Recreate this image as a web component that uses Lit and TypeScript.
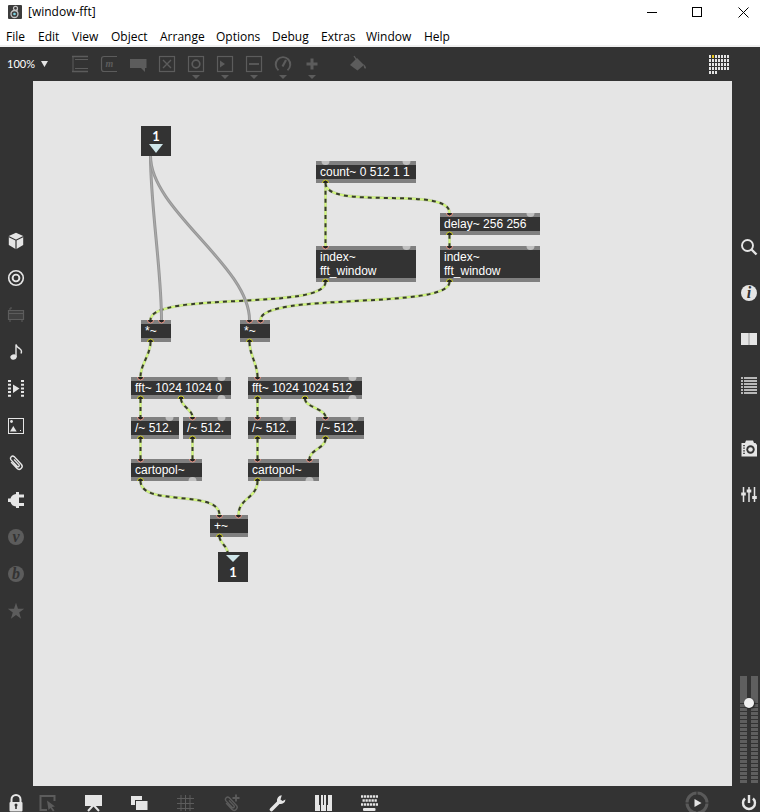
import { LitElement, html, svg, css, type TemplateResult, type SVGTemplateResult } from "lit";
import { customElement, property } from "lit/decorators.js";
import { classMap } from "lit/directives/class-map.js";
import { styleMap } from "lit/directives/style-map.js";

type Glyph = SVGTemplateResult;
interface Tool { label: string; art: Glyph; off?: boolean; drop?: boolean; gap?: boolean }

const BG = "#333333";

/* ---------- toolbar glyphs (18 x 18) ---------- */
const frame = svg`<rect x="1.5" y="1.5" width="15" height="15" fill="none" stroke="currentColor" stroke-width="1.200"/>`;
const toolbar: Tool[] = [
  { label: "Object", art: svg`<path d="M1 1.500H17M1 16.500H17" stroke="currentColor" stroke-width="1.400"/><path d="M2 1V17" stroke="currentColor" stroke-width="1"/><path d="M4 4.500H17M4 13.500H17" stroke="currentColor"/>` },
  { label: "Message", art: svg`<path d="M17 1.500H4Q1.500 1.500 1.500 4V14Q1.500 16.500 4 16.500H17" fill="none" stroke="currentColor" stroke-width="1.200"/><text x="9.500" y="12" text-anchor="middle" class="mi">m</text>` },
  { label: "Comment", art: svg`<path d="M1 4H17.500V13H16V17L12 13H1Z" fill="currentColor"/>` },
  { label: "Toggle", art: svg`${frame}<path d="M5 5L13 13M13 5L5 13" stroke="currentColor" stroke-width="1.400"/>` },
  { label: "Button", drop: true, art: svg`${frame}<circle cx="9" cy="9" r="3.800" fill="none" stroke="currentColor" stroke-width="1.700"/>` },
  { label: "Number", drop: true, art: svg`${frame}<path d="M4 5.500L9 9L4 12.500Z" fill="currentColor"/>` },
  { label: "Slider", drop: true, art: svg`${frame}<path d="M4 9H14" stroke="currentColor" stroke-width="1.800"/>` },
  { label: "Dial", drop: true, art: svg`<path d="M4.500 15.200A7.300 7.300 0 1 1 13.500 15.200" fill="none" stroke="currentColor" stroke-width="1.900"/><path d="M8.500 11.500L12 5" stroke="currentColor" stroke-width="2.200"/>` },
  { label: "Add", drop: true, art: svg`<path d="M9 3.500V14.500M3.500 9H14.500" stroke="currentColor" stroke-width="3"/>` },
  { label: "Format", gap: true, art: svg`<path d="M1 10L8 3L15 10L8.500 15.500Z" fill="currentColor"/><path d="M5 1L9 7" stroke="currentColor" stroke-width="1.300"/><path d="M14.500 9Q18 12.500 16.600 13.500Q14.800 14.500 14.500 9Z" fill="currentColor"/>` },
];

/* ---------- left bar glyphs ---------- */
const clip = svg`<g transform="rotate(-43 9 9)" fill="none" stroke="currentColor" stroke-width="1.400"><path d="M6 5V13.500A3 3 0 0 0 12 13.500V3A2.300 2.300 0 0 0 7.500 3V12.500A1.300 1.300 0 0 0 10 12.500V5"/></g>`;
const badge = (ch: string) => svg`<circle cx="9" cy="9" r="8" fill="currentColor"/><text x="9" y="14" text-anchor="middle" class="script" fill=${BG}>${ch}</text>`;
const left: Tool[] = [
  { label: "Packages", art: svg`<path d="M9 .7L16.200 4V13L9 17.200L1.800 13V4Z" fill="currentColor"/><path d="M1.500 4.500L9 8.200L16.500 4.500M9 8.200V17.500" fill="none" stroke=${BG} stroke-width="1.200"/>` },
  { label: "Objects", art: svg`<circle cx="9" cy="9" r="7.300" fill="none" stroke="currentColor" stroke-width="1.600"/><circle cx="9" cy="9" r="3.400" fill="none" stroke="currentColor" stroke-width="1.900"/>` },
  { label: "Devices", off: true, art: svg`<path d="M1.500 4.500H16.500V13.500H1.500Z" fill="#404040" stroke="currentColor" stroke-width="1.200"/><path d="M3 4V2H5M3 14V16M15 14V16M2 7.500H16" fill="none" stroke="currentColor"/>` },
  { label: "Audio", art: svg`<ellipse cx="6.500" cy="14" rx="3.200" ry="2.600" transform="rotate(-20 6.500 14)" fill="currentColor"/><path d="M9 14V1.500Q9.500 4 12.500 5.500Q15.500 7.500 14 10.500" fill="none" stroke="currentColor" stroke-width="1.400"/>` },
  { label: "Video", art: svg`<path d="M2.500 0V17M15.500 0V17" stroke="currentColor" stroke-width="3" stroke-dasharray="2 1.700"/><path d="M6 4.500L12.500 8.500L6 13Z" fill="currentColor"/>` },
  { label: "Images", art: svg`<rect x="1.500" y="1.500" width="15" height="15" fill="none" stroke="currentColor"/><circle cx="4.500" cy="4.500" r="1.400" fill="currentColor"/><path d="M3 14.500L6.300 9L9.700 14.500Z" fill="currentColor"/><rect x="13" y="13" width="1" height="1" fill="currentColor"/>` },
  { label: "Snippets", art: clip },
  { label: "Plug-ins", art: svg`<path d="M1 7.500H3.500Q4.500 3.500 9 3V1H12V3.500H17V6.500H12V12H17V15H12V17H9V15.500Q4.500 15 3.500 11H1Z" fill="currentColor"/>` },
  { label: "Vizzie", off: true, art: badge("v") },
  { label: "Beap", off: true, art: badge("b") },
  { label: "Favorites", off: true, art: svg`<path d="M9 .8L11 6.800H17.200L12.200 10.500L14.100 16.800L9 13L3.900 16.800L5.800 10.500L.8 6.800H7Z" fill="currentColor"/>` },
];

/* ---------- right bar glyphs ---------- */
const right: Tool[] = [
  { label: "Search", art: svg`<circle cx="7.500" cy="7.500" r="5.500" fill="none" stroke="currentColor" stroke-width="1.900"/><path d="M11.500 11.500L16.500 16.500" stroke="currentColor" stroke-width="2.400"/>` },
  { label: "Inspector", art: svg`<circle cx="9" cy="9" r="8" fill="currentColor"/><text x="9" y="14" text-anchor="middle" class="script" fill=${BG}>i</text>` },
  { label: "Reference", art: svg`<rect x="1" y="3" width="16" height="12" fill="currentColor"/><path d="M9 3V15" stroke="#999" stroke-width="1"/>` },
  { label: "Console", art: svg`<path d="M1 2H3M1 5H3M1 8H3M1 11H3M1 14H3M1 17H3M4 2H17M4 5H17M4 8H17M4 11H17M4 14H17M4 17H17" stroke="currentColor" stroke-width="1.600"/>` },
  { label: "Snapshots", gap: true, art: svg`<path d="M2 4H5L6 1.500H13L14 4H15.500L17 6V17.500H1.500V4Z" fill="currentColor"/><circle cx="10.500" cy="10.500" r="4.200" fill=${BG}/><circle cx="10.500" cy="10.500" r="2.300" fill="currentColor"/><path d="M4 6V16" stroke=${BG} stroke-width="1.600" stroke-dasharray="1.200 1.400"/>` },
  { label: "Parameters", art: svg`<path d="M3.500 2V17M9 2V17M14.500 2V17" stroke="currentColor" stroke-width="1.500"/><path d="M1.200 9H5.800M6.700 6H11.300M12.200 12.500H16.800" stroke="currentColor" stroke-width="3.200"/>` },
];

/* ---------- bottom bar glyphs ---------- */
const bottom: Tool[] = [
  { label: "Lock", art: svg`<path d="M4.500 8.500V5.500A4.500 4.500 0 0 1 13.500 5.500V8.500" fill="none" stroke="currentColor" stroke-width="2"/><rect x="2.500" y="8" width="13" height="9.500" rx="1" fill="currentColor"/><path d="M9 10.500V15" stroke=${BG} stroke-width="1.600"/><circle cx="9" cy="11" r="1.500" fill=${BG}/>` },
  { label: "Edit mode", off: true, art: svg`<path d="M15.500 7V2H1.500V16H8" fill="none" stroke="currentColor" stroke-width="2"/><path d="M8 6.500L16 12.500L12.800 13L15.500 16.500L14 17.500L11.500 14L9.500 16Z" fill="currentColor"/>` },
  { label: "Presentation", art: svg`<rect x="0" y="1" width="17" height="11" fill="currentColor"/><path d="M8.500 11L3 17M8.500 11L14 17" stroke="currentColor" stroke-width="2"/>` },
  { label: "Windows", art: svg`<rect x="0" y="2" width="11" height="9" fill="currentColor"/><rect x="4.500" y="6.500" width="12.500" height="10" fill="currentColor" stroke=${BG} stroke-width="1"/>` },
  { label: "Grid", off: true, art: svg`<path d="M4 1V17M8.500 1V17M13 1V17M0 4.500H17M0 9.500H17M0 14.500H17" stroke="currentColor"/>` },
  { label: "Add snippet", off: true, art: svg`<g transform="translate(-1 1)">${clip}</g><path d="M13 .5V7.500M9.500 4H16.500" stroke="currentColor" stroke-width="1.800"/>` },
  { label: "Tools", art: svg`<path d="M2.500 15.500L10 8" stroke="currentColor" stroke-width="3.600" stroke-linecap="round"/><path d="M12.800 1.300A5 5 0 0 0 8 7.200A4 4 0 0 0 10.500 10A5 5 0 0 0 16.500 5.500L13.500 7L11.500 5.500Z" fill="currentColor"/>` },
  { label: "Keyboard", art: svg`<rect x="0" y="1" width="17" height="16" fill="currentColor"/><path d="M5 1V11M12 1V11" stroke=${BG} stroke-width="2"/><path d="M8.500 1V11" stroke=${BG} stroke-width="1"/><path d="M5.500 11V17M11.500 11V17" stroke=${BG} stroke-width="1"/>` },
  { label: "Typing", art: svg`<path d="M0 2.500H17M1.500 6.500H16M0 10.500H17" stroke="currentColor" stroke-width="2.400" stroke-dasharray="2.300 .7"/><rect x="2" y="14" width="12.500" height="3" rx="1" fill="currentColor"/>` },
];

/* ---------- patch data, in canvas coordinates ---------- */
interface Box { x: number; y: number; w: number; lines: string[]; ins?: number[]; outs?: number[]; idleIns?: number[]; idleOuts?: number[] }
const boxes: Box[] = [
  { x: 283, y: 80, w: 100, lines: ["count~ 0 512 1 1"], idleIns: [9.5, 90.5], outs: [9.5] },
  { x: 407, y: 132, w: 100, lines: ["delay~ 256 256"], ins: [9.5], idleIns: [90.5], outs: [9.5] },
  { x: 283, y: 165, w: 100, lines: ["index~", "fft_window"], ins: [9.5], idleIns: [90.5], outs: [9.5] },
  { x: 407, y: 165, w: 100, lines: ["index~", "fft_window"], ins: [9.5], idleIns: [90.5], outs: [9.5] },
  { x: 108, y: 239, w: 30, lines: ["*~"], ins: [9.5, 20.5], outs: [9.5] },
  { x: 207, y: 239, w: 30, lines: ["*~"], ins: [9.5, 20.5], outs: [9.5] },
  { x: 98, y: 296, w: 100, lines: ["fft~ 1024 1024 0"], ins: [9.5], idleIns: [90.5], outs: [9.5, 50], idleOuts: [90.5] },
  { x: 215, y: 296, w: 114, lines: ["fft~ 1024 1024 512"], ins: [9.5], idleIns: [104.5], outs: [9.5, 57], idleOuts: [104.5] },
  { x: 98, y: 336, w: 48, lines: ["/~ 512."], ins: [9.5], idleIns: [38.5], outs: [9.5] },
  { x: 150, y: 336, w: 48, lines: ["/~ 512."], ins: [9.5], idleIns: [38.5], outs: [9.5] },
  { x: 215, y: 336, w: 48, lines: ["/~ 512."], ins: [9.5], idleIns: [38.5], outs: [9.5] },
  { x: 283, y: 336, w: 48, lines: ["/~ 512."], ins: [9.5], idleIns: [38.5], outs: [9.5] },
  { x: 98, y: 378, w: 71, lines: ["cartopol~"], ins: [9.5, 61.5], outs: [9.5], idleOuts: [61.5] },
  { x: 215, y: 378, w: 71, lines: ["cartopol~"], ins: [9.5, 61.5], outs: [9.5], idleOuts: [61.5] },
  { x: 177, y: 434, w: 38, lines: ["+~"], ins: [9.5, 28.5], outs: [9.5] },
];

/* from x, from y, to x, to y, pull of the curve's ends */
type Cord = [number, number, number, number, number];
const control: Cord[] = [
  [117.5, 75, 128.5, 239, 50],
  [117.5, 75, 216.5, 239, 54],
];
const signal: Cord[] = [
  [292.5, 102, 292.5, 165, 20],
  [292.5, 102, 416.5, 132, 28],
  [416.5, 154, 416.5, 165, 3],
  [292.5, 201, 117.5, 239, 29],
  [416.5, 201, 227.5, 239, 28],
  [117.5, 261, 107.5, 296, 13],
  [216.5, 261, 224.5, 296, 13],
  [107.5, 318, 107.5, 336, 6],
  [148, 318, 159.5, 336, 7],
  [224.5, 318, 224.5, 336, 6],
  [272, 318, 292.5, 336, 8],
  [107.5, 358, 107.5, 378, 6],
  [159.5, 358, 159.5, 378, 6],
  [224.5, 358, 224.5, 378, 6],
  [292.5, 358, 276.5, 378, 9],
  [107.5, 400, 186.5, 434, 26],
  [224.5, 400, 205.5, 434, 17],
  [186.5, 456, 194.5, 471, 5],
];
const curve = ([x0, y0, x1, y1, k]: Cord) => `M${x0} ${y0}C${x0} ${y0 + k} ${x1} ${y1 - k} ${x1} ${y1}`;

@customElement("tool-button")
class ToolButton extends LitElement {
  @property({ attribute: false }) tool!: Tool;
  static styles = css`
    :host { display: block; color: #e5e5e5; }
    :host([off]) { color: #5c5c5c; }
    button { display: block; margin: 0; padding: 0; border: 0; background: none; color: inherit; }
    svg { display: block; width: 18px; height: 18px; }
    .mi { font: italic bold 10px "Liberation Serif", serif; fill: currentColor; }
    .script { font: italic bold 16px "Liberation Serif", serif; }
    .drop { width: 8px; height: 4px; margin: 2px auto 0; background: currentColor; clip-path: polygon(0 0, 100% 0, 50% 100%); }
  `;
  render() {
    return html`<button aria-label=${this.tool.label}>
      <svg viewBox="0 0 18 18">${this.tool.art}</svg>
      ${this.tool.drop ? html`<div class="drop"></div>` : null}
    </button>`;
  }
}

@customElement("patch-canvas")
class PatchCanvas extends LitElement {
  static styles = css`
    :host { display: block; position: relative; overflow: hidden; background: #e5e5e5; }
    .cords { position: absolute; left: 0; top: 0; width: 100%; height: 100%; fill: none; }
    .box {
      position: absolute; box-sizing: border-box; padding-left: 4px;
      border: solid #808080; border-width: 4px 0; background: #333333; color: #ffffff;
      font: 12px/14px "Liberation Sans", Arial, sans-serif; white-space: nowrap;
    }
    .io {
      position: absolute; box-sizing: border-box; width: 30px; height: 30px; padding: 3px 0;
      display: flex; flex-direction: column; align-items: center;
      background: #333333; color: #ffffff;
      font: bold 13px/14px Lato, sans-serif;
    }
    .inlet { left: 108px; top: 45px; }
    .outlet { left: 185px; top: 471px; }
    .arrow { width: 14px; height: 9px; background: #cfe6ea; clip-path: polygon(0 0, 100% 0, 50% 100%); }
    .inlet .arrow { margin-top: 1px; }
    .outlet .arrow { margin-bottom: 3px; }
    .edge { stroke: #c3c9b8; stroke-width: 3; }
    .glow { stroke: #d2f77c; stroke-width: 2; }
    .dash { stroke: #363a2c; stroke-width: 2; stroke-dasharray: 4 4; }
    .ctl { stroke: #979797; stroke-width: 3; }
    .ctl-core { stroke: #ababab; stroke-width: 1; }
    .port-in { fill: #222222; stroke: #f09a8a; stroke-width: 1; }
    .port-out { fill: #222222; stroke: #d0d02a; stroke-width: 1; }
    .idle { fill: #c0c0c0; }
  `;

  private ports(b: Box) {
    const h = 8 + 14 * b.lines.length;
    const top = (x: number, r: number, c: string) =>
      svg`<path class=${c} d="M${b.x + x - r} ${b.y}A${r} ${r} 0 0 0 ${b.x + x + r} ${b.y}"/>`;
    const bot = (x: number, r: number, c: string) =>
      svg`<path class=${c} d="M${b.x + x - r} ${b.y + h}A${r} ${r} 0 0 1 ${b.x + x + r} ${b.y + h}"/>`;
    return svg`
      ${(b.ins ?? []).map((x) => top(x, 3, "port-in"))}
      ${(b.idleIns ?? []).map((x) => top(x, 4, "idle"))}
      ${(b.outs ?? []).map((x) => bot(x, 3, "port-out"))}
      ${(b.idleOuts ?? []).map((x) => bot(x, 4, "idle"))}`;
  }

  render() {
    return html`
      ${boxes.map((b) => html`<div class="box" style=${styleMap({ left: `${b.x}px`, top: `${b.y}px`, width: `${b.w}px` })}>
        ${b.lines.map((l) => html`<div>${l}</div>`)}
      </div>`)}
      <svg class="cords">
        ${signal.map((c) => svg`<path class="edge" d=${curve(c)}/><path class="glow" d=${curve(c)}/><path class="dash" d=${curve(c)}/>`)}
        ${control.map((c) => svg`<path class="ctl" d=${curve(c)}/><path class="ctl-core" d=${curve(c)}/>`)}
        ${boxes.map((b) => this.ports(b))}
      </svg>
      <div class="io inlet"><span>1</span><span class="arrow"></span></div>
      <div class="io outlet"><span class="arrow"></span><span>1</span></div>
    `;
  }
}

@customElement("app-root")
class AppRoot extends LitElement {
  static styles = css`
    :host {
      display: flex; flex-direction: column; min-height: 100vh; overflow: hidden;
      background: #333333; color: #000000;
      font: 12px/16px "Open Sans", "Noto Sans", sans-serif;
    }
    button { margin: 0; padding: 0; border: 0; background: none; font: inherit; color: inherit; }
    svg { display: block; }
    .title { display: flex; align-items: center; height: 24px; padding: 0 11px 0 8px; background: #ffffff; }
    .title h1 { margin: 0 0 0 6px; font: inherit; flex: 1; }
    .wins { display: flex; gap: 35px; }
    .menu {
      display: grid; grid-template-columns: 32px 34px 39px 49px 56px 56px 49px 45px 58px auto;
      justify-content: start; align-items: center; height: 23px; padding: 4px 0 0 6px; box-sizing: border-box;
      border-bottom: 2px solid #f0f0f0; background: #ffffff;
    }
    .menu button { text-align: left; }
    .bar { display: flex; align-items: flex-start; height: 34px; padding: 8px 31px 0 7px; box-sizing: border-box; }
    .zoom { display: flex; align-items: center; gap: 6px; width: 64px; height: 18px; color: #ffffff; font: 11px/16px Lato, sans-serif; }
    .tri { width: 7px; height: 6px; background: #e5e5e5; clip-path: polygon(0 0, 100% 0, 50% 100%); }
    .tools { display: flex; flex: 1; gap: 11px; }
    .tools .gap { margin-left: 17px; }
    .main { display: flex; flex: 1; }
    .left { display: flex; flex-direction: column; justify-content: center; width: 33px; padding-bottom: 17px; box-sizing: border-box; }
    .left tool-button { height: 27px; padding: 10px 0 0 7px; }
    patch-canvas { flex: 1; }
    .right { display: flex; flex-direction: column; width: 28px; padding-left: 8px; box-sizing: border-box; }
    .panels { display: flex; flex-direction: column; flex: 1; justify-content: center; padding-bottom: 17px; }
    .panels tool-button { height: 32px; padding-top: 14px; }
    .panels .gap { margin-top: 17px; }
    .gain {
      appearance: none; writing-mode: vertical-lr; direction: rtl; width: 18px; height: 108px; margin: 0 0 2px;
      background:
        linear-gradient(90deg, transparent 7px, #333333 7px 11px, transparent 11px),
        linear-gradient(#5f5f5f 24px, transparent 24px),
        repeating-linear-gradient(#5f5f5f 0 3px, #333333 3px 4px);
    }
    .gain::-webkit-slider-thumb { appearance: none; width: 10px; height: 10px; border-radius: 50%; background: #f0f0f0; box-shadow: 1px 1px 2px #222222; }
    .foot { display: flex; align-items: flex-start; height: 26px; padding: 8px 2px 0 7px; box-sizing: border-box; overflow: hidden; }
    .foot tool-button { width: 46px; }
    .foot tool-button:first-child { width: 32px; }
    .play { margin: -3px 31px 0 auto; }
  `;

  private tool(t: Tool): TemplateResult {
    return html`<tool-button class=${classMap({ gap: !!t.gap })} ?off=${!!t.off} .tool=${t}></tool-button>`;
  }

  render() {
    const cells = Array.from({ length: 31 }, (_, i) => i);
    return html`
      <header class="title">
        <svg width="14" height="14" viewBox="0 0 14 14" aria-hidden="true">
          <rect width="14" height="14" rx="1" fill="#3c3c3c"/>
          <circle cx="6.500" cy="9" r="3.500" fill="none" stroke="#c8c8c8" stroke-width="1.300"/>
          <circle cx="7.500" cy="3.300" r="2" fill="none" stroke="#c8c8c8" stroke-width="1.200"/>
          <path d="M9.500 3.500Q10 5 8.500 6.300" fill="none" stroke="#c8c8c8"/>
          <circle cx="6.500" cy="9" r="1.300" fill="#7fd6e6"/>
        </svg>
        <h1>[window-fft]</h1>
        <div class="wins">
          <button aria-label="Minimize"><svg width="11" height="11"><path d="M1 5.500H11" stroke="#000"/></svg></button>
          <button aria-label="Maximize"><svg width="11" height="11"><rect x=".5" y=".5" width="9" height="9" fill="none" stroke="#000"/></svg></button>
          <button aria-label="Close"><svg width="11" height="11"><path d="M.5 .5L10.500 10.500M10.500 .5L.5 10.500" stroke="#000"/></svg></button>
        </div>
      </header>
      <nav class="menu">
        ${["File", "Edit", "View", "Object", "Arrange", "Options", "Debug", "Extras", "Window", "Help"].map((m) => html`<button>${m}</button>`)}
      </nav>
      <div class="bar">
        <button class="zoom">100%<span class="tri"></span></button>
        <div class="tools">${toolbar.map((t) => this.tool({ ...t, off: true }))}</div>
        <button aria-label="Calendar">
          <svg width="20" height="19">${cells.map((i) => svg`<rect x=${(i % 7) * 3} y=${Math.floor(i / 7) * 4} width="2" height="3" fill=${i === 1 ? "#e8c61c" : "#e5e5e5"}/>`)}</svg>
        </button>
      </div>
      <div class="main">
        <nav class="left">${left.map((t) => this.tool(t))}</nav>
        <patch-canvas></patch-canvas>
        <aside class="right">
          <div class="panels">${right.map((t) => this.tool(t))}</div>
          <input class="gain" type="range" min="0" max="100" value="78" aria-label="Output level" />
        </aside>
      </div>
      <footer class="foot">
        ${bottom.map((t) => this.tool(t))}
        <button class="play" aria-label="Play">
          <svg width="24" height="24">
            <circle cx="12" cy="12" r="10" fill="none" stroke="#5a5a5a" stroke-width="3"/>
            <path d="M12 0V5M12 19V24M0 12H5M19 12H24" stroke="#333"/>
            <path d="M9.500 8L16.500 12L9.500 16Z" fill="#e5e5e5"/>
          </svg>
        </button>
        <button aria-label="Audio on">
          <svg width="18" height="18"><path d="M5 4.500A6 6 0 1 0 13 4.500" fill="none" stroke="#e5e5e5" stroke-width="2.400"/><path d="M9 1V9" stroke="#e5e5e5" stroke-width="2.400"/></svg>
        </button>
      </footer>
    `;
  }
}
